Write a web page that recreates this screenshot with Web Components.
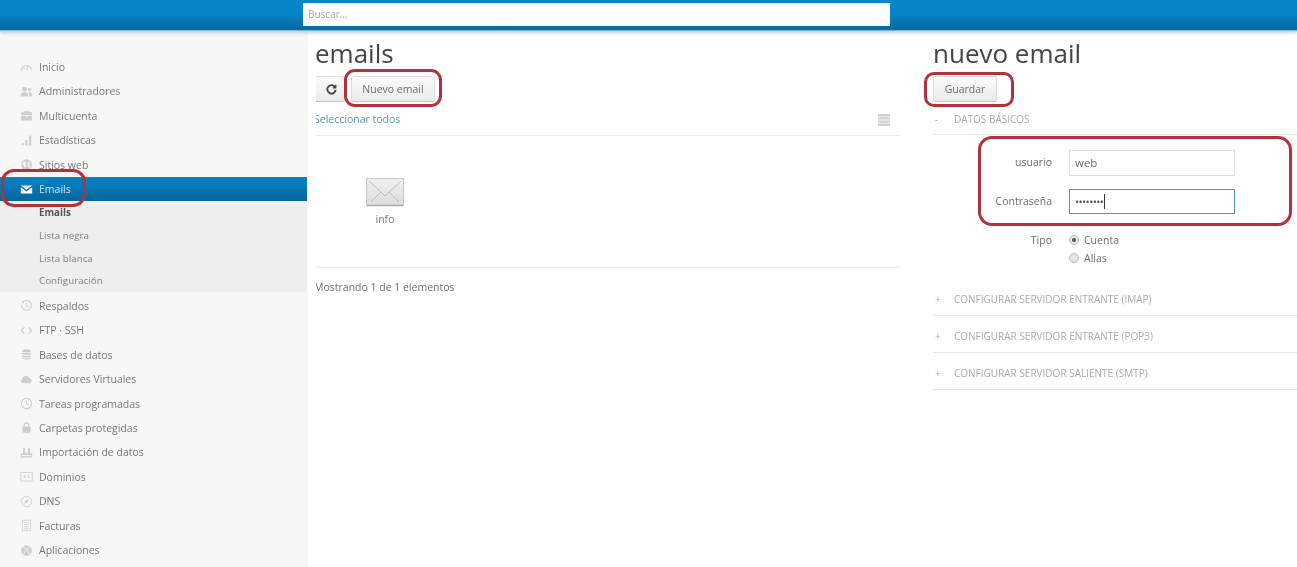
<!DOCTYPE html>
<html lang="es">
<head>
<meta charset="utf-8">
<title>Emails</title>
<style>
    html, body { margin: 0; height: 567px; overflow: hidden; background: #fff; }
    body { font-family: 'Open Sans', 'Liberation Sans', sans-serif; font-size: 10.5px; color: #666; position: relative; filter: blur(0.4px); }
    .page { display: flex; height: 535px; }
</style>
</head>
<body>
<top-bar></top-bar>
<div class="page">
    <side-nav>
        <nav-item icon="gauge">Inicio</nav-item>
        <nav-item icon="users">Administradores</nav-item>
        <nav-item icon="case">Multicuenta</nav-item>
        <nav-item icon="bars">Estadísticas</nav-item>
        <nav-item icon="globe">Sitios web</nav-item>
        <nav-item icon="mail" active>Emails</nav-item>
        <nav-group>
            <sub-item current>Emails</sub-item>
            <sub-item>Lista negra</sub-item>
            <sub-item>Lista blanca</sub-item>
            <sub-item>Configuración</sub-item>
        </nav-group>
        <nav-item icon="history">Respaldos</nav-item>
        <nav-item icon="code">FTP · SSH</nav-item>
        <nav-item icon="db">Bases de datos</nav-item>
        <nav-item icon="cloud">Servidores Virtuales</nav-item>
        <nav-item icon="clock">Tareas programadas</nav-item>
        <nav-item icon="lock">Carpetas protegidas</nav-item>
        <nav-item icon="import">Importación de datos</nav-item>
        <nav-item icon="domain">Dominios</nav-item>
        <nav-item icon="dns">DNS</nav-item>
        <nav-item icon="doc">Facturas</nav-item>
        <nav-item icon="apps">Aplicaciones</nav-item>
    </side-nav>
    <email-list></email-list>
    <email-form>
        <form-section sign="-" slot="basic">DATOS BÁSICOS</form-section>
        <form-section sign="+">CONFIGURAR SERVIDOR ENTRANTE (IMAP)</form-section>
        <form-section sign="+">CONFIGURAR SERVIDOR ENTRANTE (POP3)</form-section>
        <form-section sign="+">CONFIGURAR SERVIDOR SALIENTE (SMTP)</form-section>
    </email-form>
</div>
<ink-mark x="1" y="169" w="85" h="38" r="13"></ink-mark>
<ink-mark x="344" y="69" w="98" h="38" r="11"></ink-mark>
<ink-mark x="924" y="72" w="90" h="35" r="10"></ink-mark>
<ink-mark x="978" y="136" w="314" h="90" r="14"></ink-mark>

<script>
// icons for the side menu, all on a 16x16 box
const ICONS = {
    gauge: '<path fill-rule="evenodd" d="M1 13a7 7 0 0 1 14 0h-1.400a5.600 5.600 0 0 0-11.200 0z"/><path d="M7.200 12.600 10.200 6l.8.4-2.200 6.800z"/><path d="M3.500 12.600a4.500 4.500 0 0 1 3-4l.4 1a3.500 3.500 0 0 0-2.300 3z" opacity=".6"/>',
    users: '<circle cx="5.500" cy="5" r="3"/><path d="M.8 14c0-3.400 1.600-5 4.700-5s4.700 1.600 4.700 5z"/><circle cx="11.600" cy="5.600" r="2.200"/><path d="M11.400 9c2.400 0 3.800 1.300 3.800 5h-3.900c0-2-.2-3.600-1.200-4.600z"/>',
    case: '<path d="M5 4V2.600h6V4h3.600v3.600H1.400V4zM6.200 4h3.600V3.500H6.200z"/><path d="M1.400 8.600h5.400v1.300h2.400V8.600h5.400V14H1.400z"/>',
    bars: '<rect x="2" y="11" width="2.600" height="3"/><rect x="6.600" y="7.500" width="2.600" height="6.500"/><rect x="11.200" y="2" width="2.600" height="12"/>',
    globe: '<circle cx="8" cy="8" r="6.600"/><path d="M4 4.500h4L6.500 7 8 9.500 6 12 4.500 9 3 7.500zM10 3.500l2.500 2-1.500 2 1.500 3-2 1.500-1-3z" fill="#f7f7f7"/>',
    mail: '<path d="M1 3.200h14L8 8.400z"/><path d="M1 5.200 8 10.400l7-5.200V13H1z"/>',
    history: '<path fill="none" stroke="currentColor" stroke-width="1.300" d="M3 4.600A6 6 0 1 1 2 8"/><path d="M1.200 2.600 4.800 2.800 4.400 6.200z"/><path fill="none" stroke="currentColor" stroke-width="1.200" d="M8 4.600V8.400l2.400 1.200"/>',
    code: '<path fill="none" stroke="currentColor" stroke-width="1.500" d="M5.600 4 1.600 8l4 4M10.400 4l4 4-4 4"/>',
    db: '<ellipse cx="8" cy="3.400" rx="5.400" ry="2"/><path d="M2.600 5.200c1 1.500 9.800 1.500 10.800 0v2.200c-1 1.500-9.800 1.500-10.800 0zM2.600 8.500c1 1.500 9.800 1.500 10.800 0v2.200c-1 1.500-9.800 1.500-10.800 0zM2.600 11.700c1 1.500 9.800 1.500 10.800 0v1c-1 2-9.800 2-10.800 0z"/>',
    cloud: '<path d="M3.500 12.500a3 3 0 0 1-.6-5.400 4.500 4.500 0 0 1 8.500-1 3.400 3.400 0 0 1 1.200 6.400z"/>',
    clock: '<circle cx="8" cy="8" r="6.300" fill="none" stroke="currentColor" stroke-width="1.300"/><path fill="none" stroke="currentColor" stroke-width="1.200" d="M8 4.200V8.400l2.600 1.400"/>',
    lock: '<path fill="none" stroke="currentColor" stroke-width="1.500" d="M5.200 7.500V5a2.800 2.800 0 0 1 5.600 0v2.500"/><rect x="3" y="7" width="10" height="7.400" rx=".8"/>',
    import: '<path d="M1 9h14v5.200H1zM2.500 11v1.700h11V11z"/><path d="M3.700 2.500h2.400V9H3.700zM9.900 2.500h2.400V9H9.900z"/>',
    domain: '<path fill="none" stroke="currentColor" stroke-width="1.100" d="M1 3h14v10.500H1z"/><rect x="4.500" y="6" width="2" height="3.500"/><rect x="9.500" y="6" width="2" height="3.500"/>',
    dns: '<circle cx="8" cy="8" r="6.300" fill="none" stroke="currentColor" stroke-width="1.200"/><path d="M11 5 9.300 9.300 5 11l1.700-4.300z"/>',
    doc: '<path fill="none" stroke="currentColor" stroke-width="1.100" d="M3 1.500h10v13H3z"/><path fill="none" stroke="currentColor" d="M5 4.500h6M5 7h6M5 9.500h6M5 12h6"/>',
    apps: '<circle cx="8" cy="8" r="6.600"/><path fill="none" stroke="#f7f7f7" stroke-width="1.100" d="M3 3.500c3 1 7 5 9.500 9.500M13 3.500C9.500 5 6 9 4 12.800"/>'
};

class TopBar extends HTMLElement {
    constructor() {
        super();
        this.attachShadow({ mode: 'open' });
        this.shadowRoot.innerHTML = `
            <style>
                :host {
                    display: flex;
                    box-sizing: border-box;
                    height: 32px;
                    padding: 3px 0 0 303px;
                    background: linear-gradient(#0786cb 0, #0784c6 45%, #05689f 92%, #bcdcec 97%);
                    box-shadow: 0 1px 3px rgba(60,130,170,0.35);
                    position: relative;
                }
                .search {
                    box-sizing: border-box;
                    width: 587px;
                    height: 23px;
                    padding-left: 5px;
                    line-height: 23px;
                    background: #fff;
                    font-size: 10px;
                    color: #aaa;
                }
            </style>
            <div class="search">Buscar...</div>
        `;
    }
}

class SideNav extends HTMLElement {
    constructor() {
        super();
        this.attachShadow({ mode: 'open' });
        this.shadowRoot.innerHTML = `
            <style>
                :host {
                    display: block;
                    box-sizing: border-box;
                    width: 307px;
                    flex: none;
                    height: 100%;
                    padding-top: 22.6px;
                    background: #f7f7f7;
                    box-shadow: 1px 0 2px rgba(0,0,0,0.04);
                    overflow: hidden;
                }
            </style>
            <slot></slot>
        `;
    }
}

class NavItem extends HTMLElement {
    constructor() {
        super();
        this.attachShadow({ mode: 'open' });
    }

    connectedCallback() {
        const icon = ICONS[this.getAttribute('icon')] || '';
        this.shadowRoot.innerHTML = `
            <style>
                :host {
                    display: flex;
                    align-items: center;
                    height: 24.45px;
                    padding-left: 20px;
                    gap: 6px;
                    color: #777;
                    font-size: 10.5px;
                }
                :host([active]) {
                    background: linear-gradient(#0784c8, #05669e);
                    color: #bfe6f7;
                }
                svg { width: 13px; height: 13px; flex: none; color: #cdcdcd; fill: currentColor; }
                :host([active]) svg { color: #fff; }
            </style>
            <svg viewBox="0 0 16 16">${icon}</svg>
            <slot></slot>
        `;
    }
}

class NavGroup extends HTMLElement {
    constructor() {
        super();
        this.attachShadow({ mode: 'open' });
        this.shadowRoot.innerHTML = `
            <style>
                :host { display: block; background: #eeeeee; padding-top: .4px; margin-bottom: 1.6px; }
            </style>
            <slot></slot>
        `;
    }
}

class SubItem extends HTMLElement {
    constructor() {
        super();
        this.attachShadow({ mode: 'open' });
        this.shadowRoot.innerHTML = `
            <style>
                :host {
                    display: flex;
                    align-items: center;
                    height: 22.6px;
                    padding-left: 39px;
                    font-size: 9.8px;
                    color: #808080;
                }
                :host([current]) { font-weight: 700; color: #555; }
            </style>
            <slot></slot>
        `;
    }
}

class ActionButton extends HTMLElement {
    constructor() {
        super();
        this.attachShadow({ mode: 'open' });
        this.shadowRoot.innerHTML = `
            <style>
                :host {
                    display: flex;
                    align-items: center;
                    justify-content: center;
                    box-sizing: border-box;
                    height: 26px;
                    border: 1px solid #dcdcdc;
                    border-bottom-color: #c4c4c4;
                    border-radius: 2px;
                    background: linear-gradient(#fbfbfb, #ebebeb);
                    font-size: 10.5px;
                    color: #6c6c6c;
                }
            </style>
            <slot></slot>
        `;
    }
}

class EmailList extends HTMLElement {
    constructor() {
        super();
        this.attachShadow({ mode: 'open' });
        this.shadowRoot.innerHTML = `
            <style>
                :host {
                    display: block;
                    width: 584px;
                    margin-left: 9px;
                    flex: none;
                    overflow: hidden;
                }
                h1 {
                    margin: 5px 0 0 -1px;
                    height: 32px;
                    line-height: 32px;
                    font-size: 26px;
                    font-weight: 400;
                    color: #444;
                }
                .tools { display: flex; gap: 6px; margin-top: 7px; }
                .reload { width: 31px; margin-left: -2px; padding-left: 3px; display: flex; }
                .reload svg { width: 11px; height: 11px; fill: none; stroke: #444; stroke-width: 2; }
                .new { width: 84px; }
                .select {
                    display: flex;
                    align-items: center;
                    justify-content: space-between;
                    height: 34px;
                    box-sizing: border-box;
                    border-bottom: 1px solid #ececec;
                    padding: 0 10px 0 0;
                    color: #5a93a3;
                    font-size: 10.5px;
                }
                .select span { margin-left: -2px; }
                .select svg { width: 12px; height: 12px; fill: #d0d0d0; margin-top: 2px; }
                .grid {
                    display: flex;
                    height: 132px;
                    border-bottom: 1px solid #ececec;
                    box-sizing: border-box;
                    padding: 42px 0 0 50px;
                }
                .mail {
                    display: flex;
                    flex-direction: column;
                    align-items: center;
                    gap: 5px;
                    font-size: 10.5px;
                    color: #777;
                }
                .mail svg { width: 38px; height: 29px; display: block; }
                .count { margin: 12px 0 0 -2px; font-size: 10.5px; color: #6c6c6c; white-space: nowrap; }
            </style>
            <h1>emails</h1>
            <div class="tools">
                <action-button class="reload">
                    <svg viewBox="0 0 12 12"><path d="M10 3.500A4.600 4.600 0 1 0 10.600 6.500"/><path d="M10.800 .8v3.400H7.400" stroke-width="1.200" fill="#444"/></svg>
                </action-button>
                <action-button class="new">Nuevo email</action-button>
            </div>
            <div class="select">
                <span>Seleccionar todos</span>
                <svg viewBox="0 0 12 12"><path d="M0 0h12v2.400H0zM0 3.200h12v2.400H0zM0 6.400h12v2.400H0zM0 9.600h12V12H0z"/></svg>
            </div>
            <div class="grid">
                <div class="mail">
                    <svg viewBox="0 0 38 29">
                        <defs><linearGradient id="env" x1="0" x2="0" y1="0" y2="1"><stop offset="0" stop-color="#f0f0f0"/><stop offset="1" stop-color="#dcdcdc"/></linearGradient></defs>
                        <rect x=".5" y=".5" width="37" height="27" fill="url(#env)" stroke="#c6c6c6"/>
                        <path d="M1 27.500h36" stroke="#a9a9a9" stroke-width="1.500"/>
                        <path d="M5 24 15 14l4 4 4-4 10 10M3 3l12 11M35 3 23 14" fill="none" stroke="#bdbdbd"/>
                    </svg>
                    <span>info</span>
                </div>
            </div>
            <div class="count">Mostrando 1 de 1 elementos</div>
        `;
    }
}

class FormSection extends HTMLElement {
    constructor() {
        super();
        this.attachShadow({ mode: 'open' });
    }

    connectedCallback() {
        this.shadowRoot.innerHTML = `
            <style>
                :host {
                    display: flex;
                    align-items: center;
                    box-sizing: border-box;
                    height: 37px;
                    padding-top: 4px;
                    border-bottom: 1px solid #e8e8e8;
                    font-size: 10px;
                    color: #aaa;
                }
                i { width: 21px; padding-left: 2px; box-sizing: border-box; font-style: normal; }
            </style>
            <i>${this.getAttribute('sign')}</i><slot></slot>
        `;
    }
}

class EmailForm extends HTMLElement {
    constructor() {
        super();
        this.attachShadow({ mode: 'open' });
        this.shadowRoot.innerHTML = `
            <style>
                :host { display: block; flex: 1; margin-left: 33px; min-width: 0; }
                h1 {
                    margin: 5px 0 0;
                    height: 32px;
                    line-height: 32px;
                    font-size: 26px;
                    font-weight: 400;
                    color: #444;
                }
                .tools { display: flex; margin-top: 7px; margin-bottom: -4px; }
                .save { width: 64px; }
                ::slotted(form-section[slot="basic"]) { padding-top: 6px; }
                .fields {
                    display: grid;
                    grid-template-columns: 119px 166px;
                    column-gap: 17px;
                    row-gap: 13px;
                    align-items: center;
                    padding-top: 15px;
                    height: 144px;
                    box-sizing: border-box;
                    align-content: start;
                    grid-auto-rows: min-content;
                    font-size: 10.5px;
                    color: #6c6c6c;
                }
                .label { text-align: right; margin-top: -2px; }
                .input {
                    box-sizing: border-box;
                    height: 26px;
                    line-height: 24px;
                    border: 1px solid #dedede;
                    padding-left: 5px;
                    font-size: 11.5px;
                    color: #666;
                }
                .input.focus { height: 25px; line-height: 23px; border-color: #4f9a9e; color: #555; font-size: 11px; letter-spacing: -.6px; }
                .input.focus b { display: inline-block; width: 1px; height: 15px; margin-left: 1px; background: #333; vertical-align: -3px; }
                .options { display: flex; flex-direction: column; gap: 4px; margin-top: 6px; }
                .options div { display: flex; align-items: center; gap: 5px; height: 14px; }
                .radio {
                    box-sizing: border-box;
                    width: 10px;
                    height: 10px;
                    border-radius: 50%;
                    border: 1px solid #bbb;
                    background: #e6e6e6;
                    display: flex;
                    align-items: center;
                    justify-content: center;
                }
                .radio.on::after { content: ''; width: 4px; height: 4px; border-radius: 50%; background: #555; }
                .label.tipo { align-self: start; margin-top: 6px; }
                .rest { display: block; }
            </style>
            <h1>nuevo email</h1>
            <div class="tools"><action-button class="save">Guardar</action-button></div>
            <slot name="basic"></slot>
            <div class="fields">
                <div class="label">usuario</div>
                <div class="input">web</div>
                <div class="label">Contraseña</div>
                <div class="input focus">••••••••<b></b></div>
                <div class="label tipo">Tipo</div>
                <div class="options">
                    <div><span class="radio on"></span>Cuenta</div>
                    <div><span class="radio"></span>Alias</div>
                </div>
            </div>
            <slot class="rest"></slot>
        `;
    }
}

// red hand-drawn frames that were painted over the screenshot
class InkMark extends HTMLElement {
    constructor() {
        super();
        this.attachShadow({ mode: 'open' });
    }

    connectedCallback() {
        const a = name => this.getAttribute(name);
        this.shadowRoot.innerHTML = `
            <style>
                :host {
                    position: absolute;
                    left: ${a('x')}px;
                    top: ${a('y')}px;
                    width: ${a('w')}px;
                    height: ${a('h')}px;
                    box-sizing: border-box;
                    border: 3.5px solid #b4303c;
                    border-radius: ${a('r')}px;
                    pointer-events: none;
                }
            </style>
        `;
    }
}

customElements.define('top-bar', TopBar);
customElements.define('side-nav', SideNav);
customElements.define('nav-item', NavItem);
customElements.define('nav-group', NavGroup);
customElements.define('sub-item', SubItem);
customElements.define('action-button', ActionButton);
customElements.define('email-list', EmailList);
customElements.define('form-section', FormSection);
customElements.define('email-form', EmailForm);
customElements.define('ink-mark', InkMark);
</script>
</body>
</html>
